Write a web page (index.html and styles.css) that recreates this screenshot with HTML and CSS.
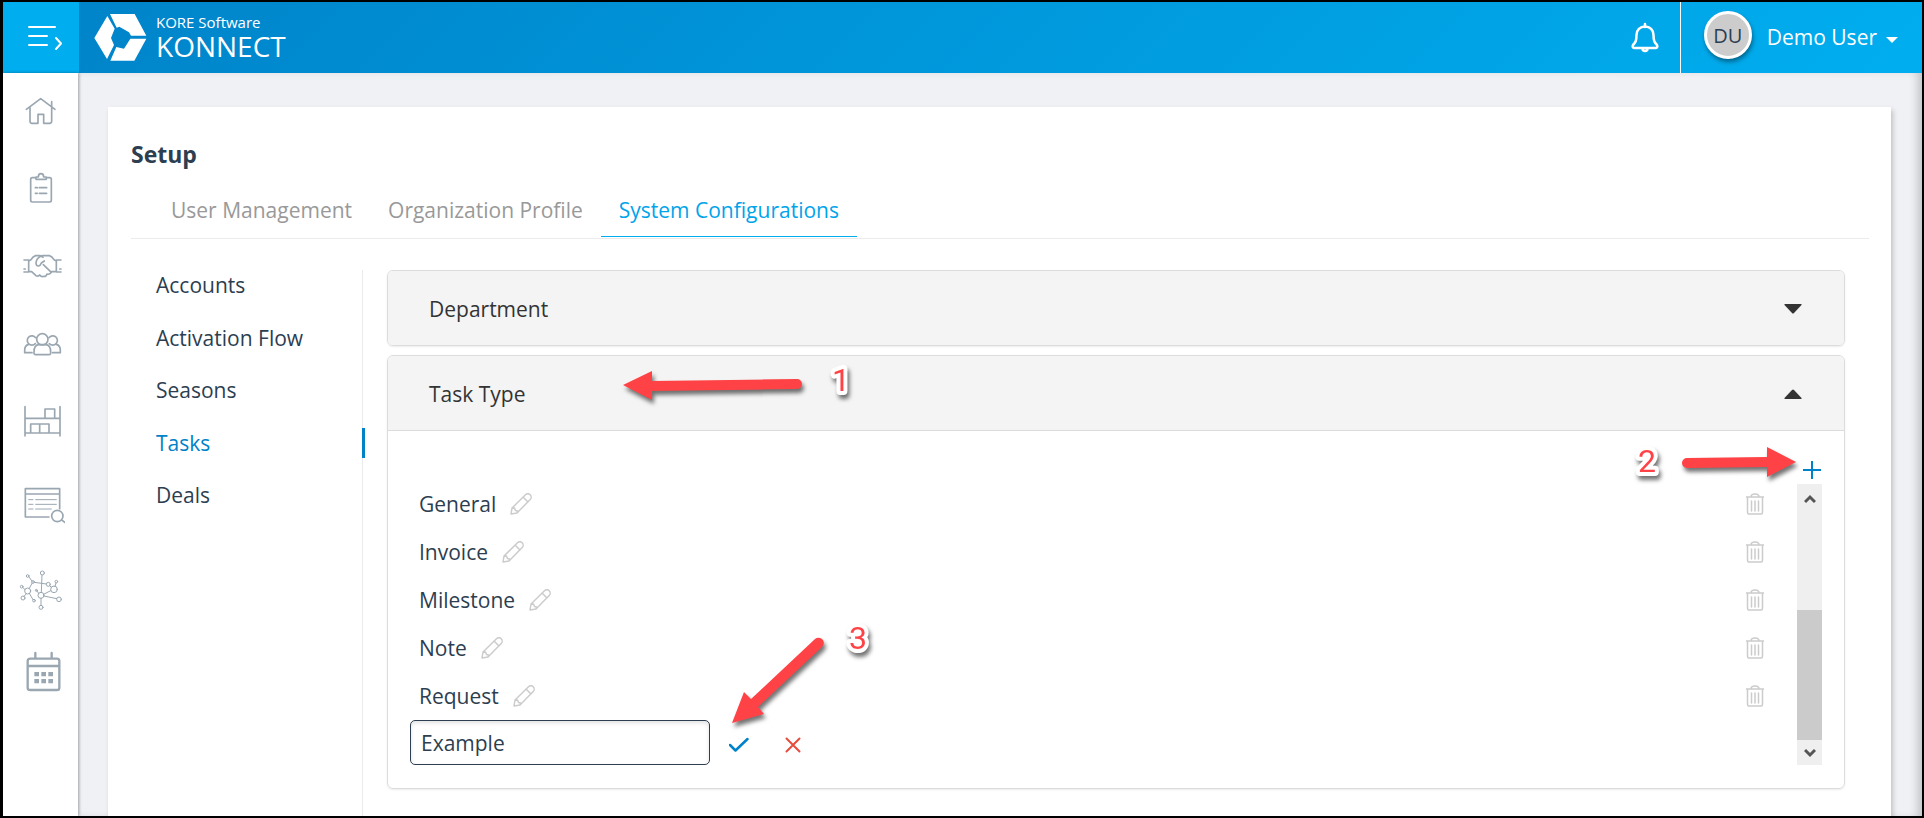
FILE: index.html
```html
<!DOCTYPE html>
<html lang="en">
<head>
  <meta charset="UTF-8">
  <meta name="viewport" content="width=device-width, initial-scale=1.0">
  <title>KORE Software KONNECT - Setup</title>
  <link rel="stylesheet" href="styles.css">
</head>
<body>
  <!-- Shared icons -->
  <svg class="sprite" aria-hidden="true">
    <symbol id="pencil" viewBox="0 0 22 22">
      <path d="M1 21l1-6L15.500 1.800a3 3 0 0 1 4.700 4.700L7 20zM13 4l5 5M2 15.500l2.500-.5 1 2.500 2 .5-.5 2"/>
    </symbol>
    <symbol id="trash" viewBox="0 0 18 22">
      <path d="M0 4h18M1.500 4v15.500q0 1.500 1.500 1.500h12q1.500 0 1.500-1.500V4M5 4q0-3 4-3t4 3M5.500 8v10M9 8v10M12.500 8v10"/>
    </symbol>
  </svg>

  <header class="header">
    <button class="menu-toggle" aria-label="Expand menu">
      <svg width="36" height="26" viewBox="0 0 36 26"><path d="M1 2h26M1 11h18M1 20h18M28 13l5 5.500-5 5.500"/></svg>
    </button>
    <a class="brand" href="#">
      <svg width="53" height="49" viewBox="282 38 159 147">
        <path d="M283 113L322 47 344 85 333 113 342 134 321 176zM330 41H404L439 106H393L387 96 358 79 350 82zM439 115L403 181H331L349 140 372 145 391 115z"/>
      </svg>
      <span class="brand-text">
        <span class="brand-company">KORE Software</span>
        <span class="brand-product">KONNECT</span>
      </span>
    </a>
    <button class="bell" aria-label="Notifications">
      <svg width="28" height="32" viewBox="0 0 28 32"><path d="M14 2v3M14 4.500c-5 0-8.500 3.500-8.500 8.500 0 6-1 7.500-3.500 10-.8 1.500 0 3 1.500 3h21c1.500 0 2.300-1.500 1.500-3-2.500-2.500-3.500-4-3.500-10 0-5-3.500-8.500-8.500-8.500zM11.500 26.500a2.500 2.500 0 0 0 5 0"/></svg>
    </button>
    <button class="user">
      <span class="avatar">DU</span>
      <span class="user-name">Demo User</span>
      <svg width="12" height="6" viewBox="0 0 12 6"><path d="M0 0h12L6 6z"/></svg>
    </button>
  </header>

  <div class="page">
    <nav class="sidebar" aria-label="Main">
      <a href="#" aria-label="Home"><svg viewBox="51 264 144 144"><path d="M79 328L122 296 165 328M90 322V364Q90 370 96 370H114V343H131V370H149Q155 370 155 364V305M155 322V318"/></svg></a>
      <a href="#" aria-label="Tasks"><svg viewBox="51 258 144 144"><path d="M108 293H97Q92 293 92 298V361Q92 366 97 366H149Q154 366 154 361V298Q154 293 149 293H139M108 291V298H139V291H131Q131 281 123 281T115 291zM106 323H112M118 323H140M106 340H112M118 340H140"/></svg></a>
      <a href="#" aria-label="Deals"><svg viewBox="51 490 144 144"><path d="M72 538H86V574H72M183 538H169V574H183M86 541L93 537Q99 527 107 525H121L129 530M169 541L162 537Q156 527 148 525H127Q109 531 108 546 108 557 116 556 121 555 124 547L133 541M86 573H95L108 585Q115 588 119 583 124 590 132 587 138 589 141 580 148 583 154 575L130 552M169 573H155M72 565H76M179 565H183"/></svg></a>
      <a href="#" aria-label="Contacts"><svg viewBox="51 275 144 144"><path d="M107 373Q101 373 102 366 102 343 117 343H137Q152 343 152 366 153 373 147 373zM96 367H74V360Q74 345 86 342M158 367H181V360Q181 345 169 342"/><circle cx="127" cy="327" r="17"/><path d="M106 340A14 14 0 1 1 107 322M148 340A14 14 0 1 0 147 322"/></svg></a>
      <a href="#" aria-label="Inventory"><svg viewBox="51 508 144 144"><path d="M75 528V616M180 528V616M75 563H180M75 607H180M135 563V535H164V563M92 607V580H147V607M119 580V607"/></svg></a>
      <a class="tall" href="#" aria-label="Search"><svg viewBox="51 90 144 144"><path d="M147 198H76V113H179V173M76 129H179"/><path class="thin" d="M86 146H99M107 146H169M86 160H99M107 160H169M86 174H99M107 174H154"/><circle cx="172" cy="195" r="17"/><path d="M185 207L197 216"/></svg></a>
      <a class="tall" href="#" aria-label="Network"><svg viewBox="51 342 144 144"><g class="thin"><circle cx="127" cy="366" r="6"/><circle cx="83" cy="375" r="4"/><circle cx="99" cy="393" r="4"/><circle cx="65" cy="407" r="4"/><circle cx="83" cy="420" r="9"/><circle cx="69" cy="441" r="6"/><circle cx="102" cy="449" r="4"/><circle cx="109" cy="418" r="3"/><circle cx="145" cy="400" r="6"/><circle cx="169" cy="392" r="4"/><circle cx="162" cy="415" r="10"/><circle cx="123" cy="433" r="9"/><circle cx="177" cy="445" r="7"/><circle cx="123" cy="469" r="6"/><path d="M126 372L124 424M87 378L96 390M103 394L139 399M96 397L88 412M68 409L75 416M79 428L72 436M88 427L99 446M111 420L116 427M149 404L154 409M168 396L165 406M131 430L152 419M132 435L170 443M123 442V463"/></g></svg></a>
      <a class="tall" href="#" aria-label="Calendar"><svg class="bold" viewBox="51 594 144 144"><path d="M106 606V622M155 606V622M91 623H171Q178 623 178 630V710Q178 717 171 717H91Q83 717 83 710V630Q83 623 91 623zM83 645H178"/><path class="solid" d="M103 663h14v13h-14zM124 663h14v13h-14zM145 663h14v13h-14zM103 684h14v13h-14zM124 684h14v13h-14zM145 684h14v13h-14z"/></svg></a>
    </nav>

    <main class="content">
      <section class="card">
        <h1>Setup</h1>
        <nav class="tabs" aria-label="Setup sections">
          <a href="#">User Management</a>
          <a href="#">Organization Profile</a>
          <a class="active" href="#">System Configurations</a>
        </nav>

        <div class="config">
          <nav class="config-nav" aria-label="Configurations">
            <ul>
              <li><a href="#">Accounts</a></li>
              <li><a href="#">Activation Flow</a></li>
              <li><a href="#">Seasons</a></li>
              <li class="active"><a href="#">Tasks</a></li>
              <li><a href="#">Deals</a></li>
            </ul>
          </nav>

          <div class="panels">
            <div class="panel">
              <button class="panel-header" aria-expanded="false">
                Department
                <svg width="18" height="10" viewBox="0 0 18 10"><path d="M1 0h16q1 0 .5 1L10 9q-1 1-2 0L.5 1Q0 0 1 0z"/></svg>
              </button>
            </div>

            <div class="panel">
              <button class="panel-header open" aria-expanded="true">
                Task Type
                <svg width="18" height="10" viewBox="0 0 18 10"><path d="M1 10h16q1 0 .5-1L10 1q-1-1-2 0L.5 9q-.5 1 .5 1z"/></svg>
              </button>
              <div class="panel-body">
                <button class="add" aria-label="Add task type">
                  <svg width="20" height="20" viewBox="0 0 20 20"><path d="M1 10h18M10 1v18"/></svg>
                </button>
                <div class="scroll-area">
                  <div class="type-list">
                    <div class="type-row">General <button aria-label="Edit General"><svg width="22" height="22"><use href="#pencil"/></svg></button><button class="delete" aria-label="Delete General"><svg width="18" height="22"><use href="#trash"/></svg></button></div>
                    <div class="type-row">Invoice <button aria-label="Edit Invoice"><svg width="22" height="22"><use href="#pencil"/></svg></button><button class="delete" aria-label="Delete Invoice"><svg width="18" height="22"><use href="#trash"/></svg></button></div>
                    <div class="type-row">Milestone <button aria-label="Edit Milestone"><svg width="22" height="22"><use href="#pencil"/></svg></button><button class="delete" aria-label="Delete Milestone"><svg width="18" height="22"><use href="#trash"/></svg></button></div>
                    <div class="type-row">Note <button aria-label="Edit Note"><svg width="22" height="22"><use href="#pencil"/></svg></button><button class="delete" aria-label="Delete Note"><svg width="18" height="22"><use href="#trash"/></svg></button></div>
                    <div class="type-row">Request <button aria-label="Edit Request"><svg width="22" height="22"><use href="#pencil"/></svg></button><button class="delete" aria-label="Delete Request"><svg width="18" height="22"><use href="#trash"/></svg></button></div>
                    <form class="new-type">
                      <input type="text" value="Example" aria-label="Task type name">
                      <button class="save" type="button" aria-label="Save"><svg width="20" height="16" viewBox="0 0 20 16"><path d="M1 8l5.500 5.500L18.500 2"/></svg></button>
                      <button class="cancel" type="button" aria-label="Cancel"><svg width="16" height="16" viewBox="0 0 16 16"><path d="M1.500 1.500l13 13M14.500 1.500l-13 13"/></svg></button>
                    </form>
                  </div>
                  <div class="scrollbar">
                    <svg width="12" height="10" viewBox="0 0 12 10"><path d="M1 8l5-5 5 5"/></svg>
                    <div class="thumb"></div>
                    <svg width="12" height="10" viewBox="0 0 12 10"><path d="M1 2l5 5 5-5"/></svg>
                  </div>
                </div>
              </div>
            </div>
          </div>
        </div>
      </section>
    </main>
  </div>

  <!-- Numbered step callouts -->
  <svg class="callout step-1" width="240" height="60" viewBox="0 0 240 60">
    <path d="M4 25L33 11V21L178 19A5 5 0 0 1 178 29L33 31V40z"/>
    <text x="213" y="31">1</text>
  </svg>
  <svg class="callout step-2" width="180" height="60" viewBox="0 0 180 60">
    <text x="18" y="43">2</text>
    <path d="M67 29L147 28V18L176 33 147 48V38L67 39A5 5 0 0 1 67 29z"/>
  </svg>
  <svg class="callout step-3" width="160" height="120" viewBox="0 0 160 120">
    <path d="M4 104L16 73 23 80 87 20A5 5 0 0 1 94 28L30 88 36 95z"/>
    <text x="121" y="30">3</text>
  </svg>
</body>
</html>
```

FILE: styles.css
```css
* {
  box-sizing: border-box;
}
body {
  position: relative;
  display: flex;
  flex-direction: column;
  min-height: 100vh;
  margin: 0;
  border: 2px solid #000;
  border-left-width: 3px;
  background: #eff1f5;
  color: #2c3e50;
  font-family: "Open Sans", sans-serif;
  font-size: 21px;
  line-height: 30px;
}
button {
  padding: 0;
  border: none;
  background: none;
  color: inherit;
  font: inherit;
  cursor: pointer;
}
a {
  color: inherit;
  text-decoration: none;
}
svg {
  display: block;
  flex: none;
  fill: none;
  stroke-linecap: round;
  stroke-linejoin: round;
}
.sprite {
  position: absolute;
  width: 0;
  height: 0;
}

/* Header */
.header {
  display: flex;
  align-items: stretch;
  height: 71px;
  background: linear-gradient(135deg, #0082c8, #00aeef);
  color: #fff;
}
.menu-toggle {
  display: flex;
  align-items: center;
  justify-content: center;
  width: 76px;
  padding-left: 10px;
  background: #00aeef;
}
.menu-toggle svg {
  stroke: #fff;
  stroke-width: 2;
}
.brand {
  display: flex;
  align-items: center;
  gap: 9px;
  margin-right: auto;
  padding-left: 15px;
}
.brand svg {
  fill: #fff;
}
.brand-text {
  display: flex;
  flex-direction: column;
  padding-bottom: 2px;
}
.brand-company {
  font-size: 15px;
  line-height: 18px;
}
.brand-product {
  font-size: 28px;
  line-height: 30px;
}
.bell {
  padding: 0 21px;
}
.bell svg {
  stroke: #fff;
  stroke-width: 2.500;
}
.user {
  display: flex;
  align-items: center;
  padding: 0 24px 2px 23px;
  border-left: 1px solid #fff;
}
.user svg {
  margin: 6px 0 0 9px;
  fill: #fff;
}
.avatar {
  width: 48px;
  height: 48px;
  margin: 0 15px 4px 0;
  border: 3px solid #fff;
  border-radius: 50%;
  background: #ccc;
  box-shadow: 1px 3px 4px rgba(0, 0, 0, .4);
  color: #2c3e50;
  font-size: 20px;
  line-height: 44px;
  text-align: center;
}

/* Sidebar */
.page {
  display: flex;
  flex: 1;
}
.sidebar {
  width: 75px;
  background: #fff;
  box-shadow: 1px 0 3px rgba(0, 0, 0, .35);
}
.sidebar a {
  display: flex;
  align-items: center;
  justify-content: center;
  height: 78px;
}
.sidebar .tall {
  height: 84px;
}
.sidebar svg {
  width: 48px;
  height: 48px;
  stroke: #9aa7b1;
  stroke-width: 5;
}
.sidebar .thin {
  stroke-width: 3;
}
.sidebar .bold {
  stroke-width: 7;
}
.sidebar .solid {
  fill: #9aa7b1;
  stroke: none;
}

/* Card */
.content {
  display: flex;
  flex: 1;
  padding: 34px 31px 0 30px;
  box-shadow: inset -8px 0 10px -4px rgba(0, 0, 0, .2);
}
.card {
  display: flex;
  flex-direction: column;
  flex: 1;
  padding: 31px 22px 0 23px;
  background: #fff;
  box-shadow: 2px 3px 5px rgba(0, 0, 0, .2);
}
h1 {
  margin: 0 0 25px;
  font-size: 23px;
  line-height: 32px;
}
.tabs {
  display: flex;
  padding: 0 22px 1px;
  border-bottom: 1px solid #ebebeb;
  color: #999;
}
.tabs a {
  padding: 0 18px 11px;
  border-bottom: 1px solid transparent;
}
.tabs .active {
  border-color: #00aeef;
  color: #00a4ea;
}
.config {
  display: flex;
  flex: 1;
  gap: 24px;
  margin: 31px 24px 0 0;
}
.config-nav {
  width: 232px;
  border-right: 1px solid #ebebeb;
}
.config-nav ul {
  display: flex;
  flex-direction: column;
  justify-content: space-between;
  height: 240px;
  margin: 0;
  padding: 0;
  list-style: none;
}
.config-nav li {
  position: relative;
  padding-left: 25px;
}
.config-nav .active {
  color: #0082c8;
}
.config-nav .active::after {
  content: "";
  position: absolute;
  top: 0;
  right: -3px;
  width: 3px;
  height: 30px;
  background: #0082c8;
}

/* Accordion panels */
.panels {
  display: flex;
  flex-direction: column;
  flex: 1;
  gap: 9px;
  padding-bottom: 26px;
}
.panel {
  border: 1px solid #dbdcdc;
  border-radius: 6px;
  box-shadow: 0 1px 2px rgba(0, 0, 0, .08);
}
.panel-header {
  display: flex;
  align-items: center;
  justify-content: space-between;
  width: 100%;
  height: 74px;
  padding: 2px 42px 0 41px;
  border-radius: 5px;
  background: #f4f4f4;
  color: #333;
}
.panel-header.open {
  height: 75px;
  border-bottom: 1px solid #dbdcdc;
  border-radius: 5px 5px 0 0;
}
.panel-header svg {
  fill: #333;
}
.panel-body {
  padding: 29px 22px 23px;
}
.add {
  display: block;
  margin-left: auto;
}
.add svg {
  stroke: #0082c8;
  stroke-width: 2;
  stroke-linecap: butt;
}
.scroll-area {
  display: flex;
}
.type-list {
  flex: 1;
}
.type-row {
  display: flex;
  align-items: center;
  height: 48px;
  padding: 0 33px 0 9px;
}
.type-row button {
  margin-left: 14px;
}
.type-row .delete {
  margin-left: auto;
}
.type-row svg {
  stroke: #ccc;
  stroke-width: 1.500;
}
.new-type {
  display: flex;
  align-items: center;
}
.new-type input {
  width: 300px;
  height: 45px;
  padding: 0 10px;
  border: 1px solid #2c3e50;
  border-radius: 5px;
  background: #fff;
  box-shadow: inset 0 2px 4px rgba(0, 0, 0, .12);
  color: #2c3e50;
  font: inherit;
}
.save {
  margin: 5px 36px 0 19px;
}
.save svg {
  stroke: #0082c8;
  stroke-width: 2.500;
}
.cancel {
  margin-top: 5px;
}
.cancel svg {
  stroke: #e74c3c;
  stroke-width: 2;
}
.scrollbar {
  display: flex;
  flex-direction: column;
  align-items: center;
  width: 25px;
  margin-top: 4px;
  padding: 10px 0 7px;
  background: #efefef;
}
.scrollbar svg {
  stroke: #555;
  stroke-width: 3;
  stroke-linecap: butt;
  stroke-linejoin: miter;
}
.thumb {
  width: 100%;
  height: 130px;
  margin: auto 0 8px;
  background: #cbcbcb;
}

/* Step callouts */
.callout {
  position: absolute;
  overflow: visible;
  fill: #ff4245;
  filter: drop-shadow(2px 4px 2px rgba(0, 0, 0, .55));
  pointer-events: none;
}
.callout text {
  font-family: Roboto, sans-serif;
  font-size: 32px;
  stroke: #fff;
  stroke-width: 8;
  paint-order: stroke;
}
.step-1 {
  top: 358px;
  left: 616px;
}
.step-2 {
  top: 427px;
  right: 122px;
}
.step-3 {
  top: 617px;
  left: 725px;
}
```
